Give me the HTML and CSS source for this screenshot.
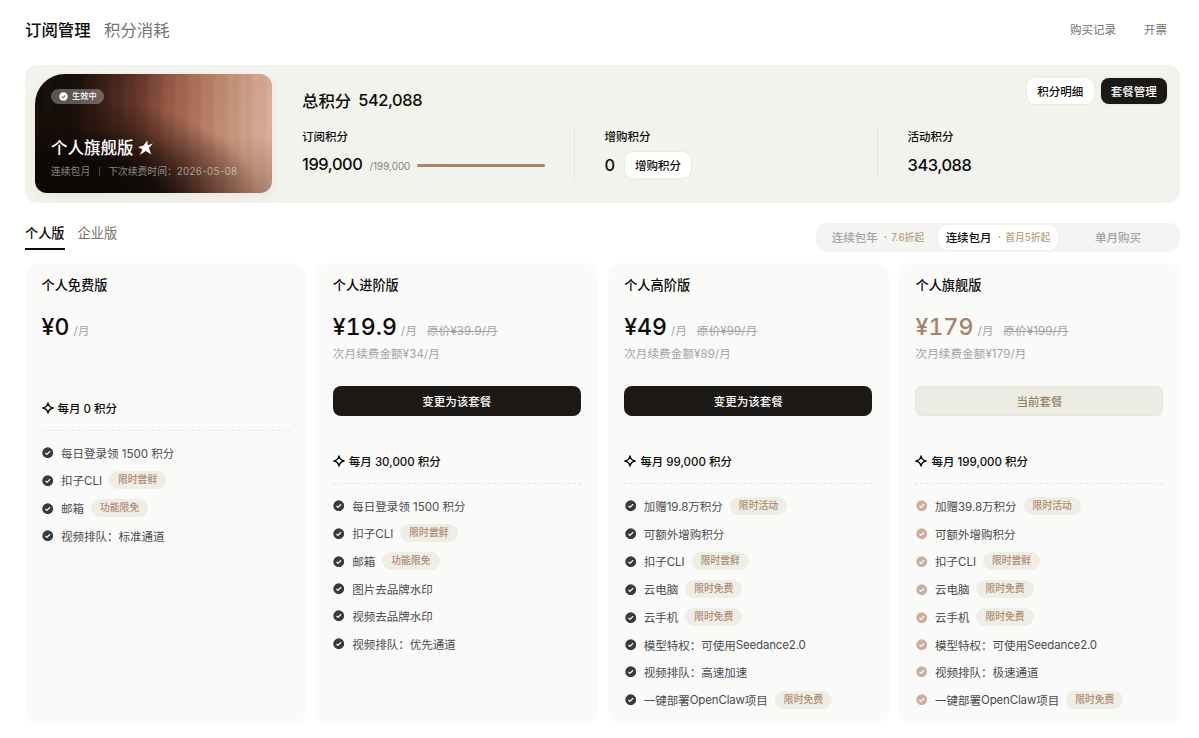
FILE: index.html
```html
<!DOCTYPE html>
<html lang="zh-CN">
<head>
    <meta charset="UTF-8">
    <meta name="viewport" content="width=device-width, initial-scale=1.0">
    <title>订阅管理</title>
    <link rel="stylesheet" href="styles.css">
</head>
<body>

    <svg class="sprite" aria-hidden="true">
        <symbol id="check" viewBox="0 0 12 12">
            <path fill-rule="evenodd" d="M6 .3a5.7 5.7 0 1 0 0 11.4A5.7 5.7 0 0 0 6 .3zm2.9 4.6L5.7 8.2a.7.7 0 0 1-1 0L3.2 6.7l.9-.9 1.1 1.1L8 4z"/>
        </symbol>
        <symbol id="spark" viewBox="0 0 12 12">
            <path fill="none" stroke="currentColor" stroke-width="1.3" stroke-linejoin="round" d="M6 .8C6.500 3.600 8.400 5.500 11.200 6 8.400 6.500 6.500 8.400 6 11.200 5.500 8.400 3.600 6.500 .8 6 3.600 5.500 5.500 3.600 6 .8z"/>
        </symbol>
    </svg>

    <header class="header">
        <nav class="titles">
            <h1>订阅管理</h1>
            <a>积分消耗</a>
        </nav>
        <nav class="links">
            <a>购买记录</a>
            <a>开票</a>
        </nav>
    </header>

    <section class="banner">
        <div class="member-card">
            <span class="status"><svg><use href="#check"/></svg><span>生效中</span></span>
            <div class="member-name">个人旗舰版
                <svg viewBox="0 0 14 14"><path d="M8.700 .2 9 4.800 13.900 3.300 10.200 7.400 12.400 13.500 7.300 10.200 1.600 13.900 4.200 8.900 .1 6.600 5.200 5.200z"/></svg>
            </div>
            <div class="member-info"><span>连续包月</span><i></i><span>下次续费时间：<span class="date">2026-05-08</span></span></div>
        </div>
        <div class="points">
            <div class="total"><span>总积分</span><b>542,088</b></div>
            <div class="columns">
                <div class="column">
                    <div class="column-label">订阅积分</div>
                    <div class="column-value first"><b>199,000</b><small>/199,000</small><div class="progress"><div class="progress-bar" style="width: 100%;"></div></div></div>
                </div>
                <div class="column">
                    <div class="column-label">增购积分</div>
                    <div class="column-value"><b>0</b><button class="btn">增购积分</button></div>
                </div>
                <div class="column">
                    <div class="column-label">活动积分</div>
                    <div class="column-value"><b>343,088</b></div>
                </div>
            </div>
        </div>
        <div class="actions">
            <button class="btn">积分明细</button>
            <button class="btn dark">套餐管理</button>
        </div>
    </section>

    <div class="toolbar">
        <nav class="tabs">
            <a class="active">个人版</a>
            <a>企业版</a>
        </nav>
        <div class="periods">
            <div class="period">连续包年<em>·</em><small>7.6折起</small></div>
            <div class="period active">连续包月<em>·</em><small>首月5折起</small></div>
            <div class="period">单月购买</div>
        </div>
    </div>

    <main class="plans">
        <section class="plan free">
            <h2>个人免费版</h2>
            <div class="price"><b>¥0</b><span>/月</span></div>
            <div class="renew"></div>
            <div class="credits"><svg><use href="#spark"/></svg>每月 0 积分</div>
            <ul>
                <li><svg><use href="#check"/></svg>每日登录领 1500 积分</li>
                <li><svg><use href="#check"/></svg>扣子CLI<span class="tag">限时尝鲜</span></li>
                <li><svg><use href="#check"/></svg>邮箱<span class="tag">功能限免</span></li>
                <li><svg><use href="#check"/></svg>视频排队：标准通道</li>
            </ul>
        </section>

        <section class="plan">
            <h2>个人进阶版</h2>
            <div class="price"><b>¥19.9</b><span>/月</span><del>原价¥39.9/月</del></div>
            <div class="renew">次月续费金额¥34/月</div>
            <button class="choose">变更为该套餐</button>
            <div class="credits"><svg><use href="#spark"/></svg>每月 30,000 积分</div>
            <ul>
                <li><svg><use href="#check"/></svg>每日登录领 1500 积分</li>
                <li><svg><use href="#check"/></svg>扣子CLI<span class="tag">限时尝鲜</span></li>
                <li><svg><use href="#check"/></svg>邮箱<span class="tag">功能限免</span></li>
                <li><svg><use href="#check"/></svg>图片去品牌水印</li>
                <li><svg><use href="#check"/></svg>视频去品牌水印</li>
                <li><svg><use href="#check"/></svg>视频排队：优先通道</li>
            </ul>
        </section>

        <section class="plan">
            <h2>个人高阶版</h2>
            <div class="price"><b>¥49</b><span>/月</span><del>原价¥99/月</del></div>
            <div class="renew">次月续费金额¥89/月</div>
            <button class="choose">变更为该套餐</button>
            <div class="credits"><svg><use href="#spark"/></svg>每月 99,000 积分</div>
            <ul>
                <li><svg><use href="#check"/></svg>加赠19.8万积分<span class="tag">限时活动</span></li>
                <li><svg><use href="#check"/></svg>可额外增购积分</li>
                <li><svg><use href="#check"/></svg>扣子CLI<span class="tag">限时尝鲜</span></li>
                <li><svg><use href="#check"/></svg>云电脑<span class="tag">限时免费</span></li>
                <li><svg><use href="#check"/></svg>云手机<span class="tag">限时免费</span></li>
                <li><svg><use href="#check"/></svg>模型特权：可使用<span class="brand">Seedance2.0</span></li>
                <li><svg><use href="#check"/></svg>视频排队：高速加速</li>
                <li><svg><use href="#check"/></svg>一键部署<span class="brand">OpenClaw</span>项目<span class="tag">限时免费</span></li>
            </ul>
        </section>

        <section class="plan current">
            <h2>个人旗舰版</h2>
            <div class="price"><b>¥179</b><span>/月</span><del>原价¥199/月</del></div>
            <div class="renew">次月续费金额¥179/月</div>
            <button class="choose">当前套餐</button>
            <div class="credits"><svg><use href="#spark"/></svg>每月 199,000 积分</div>
            <ul>
                <li><svg><use href="#check"/></svg>加赠39.8万积分<span class="tag">限时活动</span></li>
                <li><svg><use href="#check"/></svg>可额外增购积分</li>
                <li><svg><use href="#check"/></svg>扣子CLI<span class="tag">限时尝鲜</span></li>
                <li><svg><use href="#check"/></svg>云电脑<span class="tag">限时免费</span></li>
                <li><svg><use href="#check"/></svg>云手机<span class="tag">限时免费</span></li>
                <li><svg><use href="#check"/></svg>模型特权：可使用<span class="brand">Seedance2.0</span></li>
                <li><svg><use href="#check"/></svg>视频排队：极速通道</li>
                <li><svg><use href="#check"/></svg>一键部署<span class="brand">OpenClaw</span>项目<span class="tag">限时免费</span></li>
            </ul>
        </section>
    </main>

</body>
</html>
```
FILE: styles.css
```css
* { box-sizing: border-box; margin: 0; padding: 0; }
body { height: 738px; padding: 0 19px 0 25px; overflow: hidden; background: #fff; color: #0c0c0d; font-family: Inter, "Noto Sans CJK SC", sans-serif; font-size: 11.5px; }
button { border: 0; font: inherit; }
b { font-weight: 500; }
svg { flex: none; fill: currentColor; }
.sprite { display: none; }

/* header */
.header { display: flex; justify-content: space-between; align-items: center; height: 58px; padding-right: 13px; }
.titles { display: flex; gap: 13.5px; font-size: 16.4px; color: #78716c; }
.titles h1 { font-size: inherit; font-weight: 500; color: #0c0c0d; }
.links { display: flex; gap: 28px; color: #78716c; }

/* points banner */
.banner { display: flex; align-items: flex-start; width: 1155px; height: 138px; margin-top: 7px; padding: 9px 13px 0 10px; border-radius: 12px; background: #f2f3ec; }
.member-card { width: 237px; height: 119px; padding: 15px 16px; border-radius: 30px 12px 12px 12px; color: #fff; box-shadow: 0 4px 12px rgba(80, 60, 40, 0.06);
    background:
        radial-gradient(ellipse 78% 88% at 18% 108%, #0b0705 0%, rgba(11, 7, 5, 0.92) 45%, rgba(30, 14, 8, 0.4) 75%, rgba(40, 18, 10, 0) 100%),
        linear-gradient(180deg, rgba(90, 35, 20, 0) 50%, rgba(90, 35, 20, 0.35) 100%),
        repeating-linear-gradient(90deg, rgba(255, 220, 200, 0.02) 0, rgba(60, 20, 10, 0.04) 7px, rgba(255, 220, 200, 0.02) 13px),
        linear-gradient(97deg, #110c08 0%, #150d09 17%, #3c1f17 29%, #653629 42%, #955945 54%, #b57962 68%, #ca9a82 83%, #deb8a1 100%); }
.status { display: flex; align-items: center; gap: 4px; width: 53px; height: 15px; padding-left: 8px; border-radius: 8px; background: rgba(255, 255, 255, 0.3); font-size: 8.2px; font-weight: 500; line-height: 12px; }
.status > span { margin-top: -1px; }
.status svg { width: 9px; height: 9px; }
.member-name { display: flex; align-items: center; gap: 4px; height: 24px; margin-top: 31px; font-size: 16.5px; font-weight: 500; }
.member-name svg { width: 15px; height: 15px; margin-top: 1px; }
.member-info { display: flex; align-items: center; height: 14px; margin-top: 5px; font-size: 9.8px; white-space: nowrap; color: rgba(255, 255, 255, 0.5); }
.member-info i { width: 1px; height: 9px; margin: 0 8.5px; background: rgba(255, 255, 255, 0.25); }
.date { letter-spacing: 0.3px; }
.points { width: 725px; padding: 14px 0 0 30px; }
.total { display: flex; align-items: center; gap: 7px; height: 24px; font-size: 16.4px; font-weight: 500; }
.total b, .column-value b { letter-spacing: -0.4px; }
.columns { display: flex; width: 908px; margin-top: 16px; }
.column { width: 302px; height: 51px; padding-right: 30px; }
.column + .column { width: 333px; margin-left: -30px; padding-left: 29.5px; border-left: 1px solid #e3e4dd; }
.column-label { height: 18px; line-height: 18px; font-weight: 500; }
.column-value { display: flex; align-items: center; height: 26px; margin-top: 6px; font-size: 16.4px; }
.column-value.first { height: 23px; }
.column-value small { margin: 4px 7px 0; font-size: 9.9px; color: #86847f; }
.column-value .btn { margin-left: 10px; }
.progress { width: 128px; margin-top: 4px; border-radius: 2px; background: #e5e1da; }
.progress-bar { height: 3.5px; border-radius: 2px; background: #a8866c; }
.actions { display: flex; gap: 7px; margin: 4px 0 0 auto; }
.btn { width: 66.5px; height: 26px; padding-bottom: 1px; border-radius: 8px; background: #fff; box-shadow: 0 0 0 1px rgba(0, 0, 0, 0.04); color: #0c0c0d; font-size: 11.5px; font-weight: 500; white-space: nowrap; }
.btn.dark { background: #1b1815; color: #fff; }

/* tabs and billing period */
.toolbar { display: flex; justify-content: space-between; width: 1155px; margin-top: 20px; }
.tabs { display: flex; gap: 13px; height: 27px; font-size: 13.2px; line-height: 21px; color: #78716c; }
.tabs .active { border-bottom: 2px solid #0c0c0d; font-weight: 500; color: #0c0c0d; }
.periods { display: flex; width: 364px; height: 29px; padding: 2px; border-radius: 11px; background: #f4f4f2; }
.period { display: flex; flex: 1; align-items: center; justify-content: center; padding-bottom: 1px; border-radius: 9px; color: #a3a3a8; font-weight: 500; white-space: nowrap; }
.period.active { background: #fff; box-shadow: 0 0 2px rgba(0, 0, 0, 0.08); color: #0c0c0d; }
.period em { margin: 0 4px 0 6px; font-style: normal; color: #b5a47e; }
.period small { font-size: 9.8px; color: #b5a47e; }

/* plans */
.plans { display: grid; grid-template-columns: repeat(4, 281px); justify-content: space-between; width: 1155px; height: 461px; margin-top: 11px; }
.plan { padding: 11px 16.5px 0; border-radius: 14px; background: #fafaf8; }
.plan h2 { height: 22px; font-size: 13.2px; font-weight: 500; line-height: 22px; }
.price { display: flex; align-items: baseline; height: 32px; margin-top: 15px; line-height: 32px; font-size: 11.5px; color: #a3a3a8; white-space: nowrap; }
.price b { margin-right: 4px; font-size: 23px; font-variant-numeric: tabular-nums; letter-spacing: 0.1px; color: #0c0c0d; }
.price span { letter-spacing: 0.4px; }
.price del { margin-left: 9.5px; letter-spacing: 0.15px; }
.renew { height: 18px; margin-top: 2px; line-height: 18px; letter-spacing: 0.15px; color: #a3a3a8; }
.choose { display: block; width: 100%; height: 30px; margin-top: 23px; padding-bottom: 1px; border-radius: 8px; background: #1b1815; color: #fff; font-weight: 500; }
.credits { display: flex; align-items: center; gap: 4px; height: 34px; margin-top: 34px; padding-bottom: 12px; border-bottom: 1px dashed #e7e6e2; font-weight: 500; }
.credits svg { width: 12px; height: 12px; }
.plan ul { display: flex; flex-direction: column; gap: 10px; margin-top: 13px; list-style: none; }
.plan li { display: flex; align-items: center; height: 17.3px; color: #4b4b51; white-space: nowrap; }
.plan li:has(.tag) { height: 18px; }
.plan li svg { width: 11.5px; height: 11.5px; margin: 0 7.5px 0 0.5px; color: #3a3940; }
.brand { letter-spacing: -0.15px; }
.tag { height: 18px; margin-left: 7px; padding: 0 9px; border-radius: 9px; background: #eeede6; color: #b18a70; font-size: 9.8px; font-weight: 500; line-height: 18.5px; }
.current .price b { color: #a8836a; }
.current .choose { background: #ecece4; box-shadow: inset 0 0 0 1px #e5e5dd; color: #94855f; }
.current li svg { color: #c9b0a0; }
```
